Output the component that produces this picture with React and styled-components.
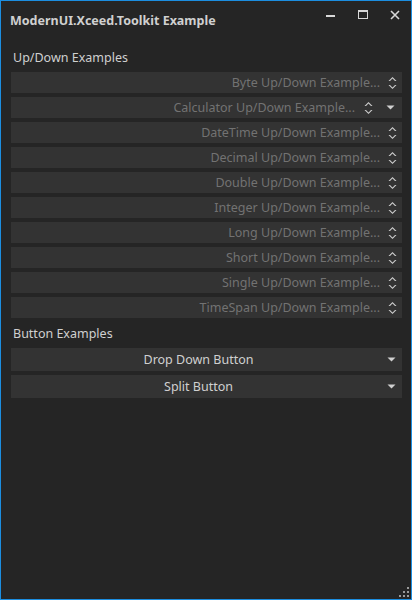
import React from 'react';
import styled, { createGlobalStyle } from 'styled-components';

const GlobalStyle = createGlobalStyle`
  html, body {
    margin: 0;
    padding: 0;
    background: #252525;
  }
  * {
    box-sizing: border-box;
  }
`;

const upDownExamples = [
  { label: 'Byte Up/Down Example...' },
  { label: 'Calculator Up/Down Example...', dropDown: true },
  { label: 'DateTime Up/Down Example...' },
  { label: 'Decimal Up/Down Example...' },
  { label: 'Double Up/Down Example...' },
  { label: 'Integer Up/Down Example...' },
  { label: 'Long Up/Down Example...' },
  { label: 'Short Up/Down Example...' },
  { label: 'Single Up/Down Example...' },
  { label: 'TimeSpan Up/Down Example...' },
];

const SpinIcon = () => (
  <svg width="9" height="14" viewBox="0 0 9 14">
    <path d="M0.5 5 L4.5 1 L8.5 5 L7 5 L4.5 2.6 L2 5 Z" fill="#d0d0d0" />
    <path d="M0.5 9 L4.5 13 L8.5 9 L7 9 L4.5 11.4 L2 9 Z" fill="#d0d0d0" />
  </svg>
);

const DropIcon = () => (
  <svg width="9" height="5" viewBox="0 0 9 5">
    <path d="M0.5 0.5 L8.5 0.5 L4.5 4.5 Z" fill="#d0d0d0" />
  </svg>
);

const App = () => {
  return (
    <>
      <GlobalStyle />
      <Window>
        <TitleBar>
          <Title>ModernUI.Xceed.Toolkit Example</Title>
          <Controls>
            <ControlButton>
              <svg width="10" height="10" viewBox="0 0 10 10">
                <rect x="0" y="5" width="9" height="2" fill="#d8d8d8" />
              </svg>
            </ControlButton>
            <ControlButton>
              <svg width="10" height="10" viewBox="0 0 10 10">
                <rect x="0.5" y="0.5" width="9" height="8" fill="none" stroke="#d8d8d8" />
                <rect x="0" y="0" width="10" height="2" fill="#d8d8d8" />
              </svg>
            </ControlButton>
            <ControlButton>
              <svg width="10" height="10" viewBox="0 0 10 10">
                <path d="M1 1 L9 9 M9 1 L1 9" stroke="#d8d8d8" strokeWidth="1.6" />
              </svg>
            </ControlButton>
          </Controls>
        </TitleBar>
        <Content>
          <SectionLabel>Up/Down Examples</SectionLabel>
          <FieldList>
            {upDownExamples.map(item => (
              <Field key={item.label}>
                <FieldText>{item.label}</FieldText>
                <IconSlot $width={item.dropDown ? 20 : 19}>
                  <SpinIcon />
                </IconSlot>
                {item.dropDown && (
                  <IconSlot $width={24}>
                    <DropIcon />
                  </IconSlot>
                )}
              </Field>
            ))}
          </FieldList>
          <SectionLabel>Button Examples</SectionLabel>
          <ButtonList>
            <DropButton>
              <ButtonText>Drop Down Button</ButtonText>
              <IconSlot $width={22}>
                <DropIcon />
              </IconSlot>
            </DropButton>
            <DropButton>
              <ButtonText>Split Button</ButtonText>
              <IconSlot $width={22}>
                <DropIcon />
              </IconSlot>
            </DropButton>
          </ButtonList>
        </Content>
        <Grip>
          <svg width="10" height="10" viewBox="0 0 10 10">
            <rect x="8" y="0" width="2" height="2" fill="#9a9a9a" />
            <rect x="4" y="4" width="2" height="2" fill="#9a9a9a" />
            <rect x="8" y="4" width="2" height="2" fill="#9a9a9a" />
            <rect x="0" y="8" width="2" height="2" fill="#9a9a9a" />
            <rect x="4" y="8" width="2" height="2" fill="#9a9a9a" />
            <rect x="8" y="8" width="2" height="2" fill="#9a9a9a" />
          </svg>
        </Grip>
      </Window>
    </>
  );
};

export default App;

const Window = styled.div`
  position: relative;
  width: 412px;
  height: 600px;
  border: 1px solid #1c8ee0;
  background: #252525;
  font-family: 'Noto Sans', 'Open Sans', sans-serif;
  display: flex;
  flex-direction: column;
`;

const TitleBar = styled.div`
  display: flex;
  align-items: flex-start;
  justify-content: space-between;
  height: 49px;
  padding-left: 9px;
`;

const Title = styled.div`
  margin-top: 11px;
  font-size: 12.5px;
  font-weight: 700;
  color: #d0d0d0;
`;

const Controls = styled.div`
  display: flex;
  padding-top: 1px;
`;

const ControlButton = styled.div`
  width: 32px;
  height: 26px;
  display: flex;
  align-items: center;
  justify-content: center;
`;

const Content = styled.div`
  padding: 0 9px 0 10px;
  display: flex;
  flex-direction: column;
`;

const SectionLabel = styled.div`
  font-size: 12.5px;
  color: #d0d0d0;
  padding-left: 2px;
  height: 22px;
  line-height: 16px;
`;

const FieldList = styled.div`
  display: flex;
  flex-direction: column;
  gap: 4px;
  margin-bottom: 8px;
`;

const Field = styled.div`
  display: flex;
  align-items: center;
  height: 21px;
  background: #333333;
`;

const FieldText = styled.div`
  flex: 1;
  text-align: right;
  font-size: 12.5px;
  color: #727272;
  white-space: nowrap;
  overflow: hidden;
  padding-right: 3px;
`;

const IconSlot = styled.div`
  width: ${props => props.$width}px;
  display: flex;
  align-items: center;
  justify-content: center;
`;

const ButtonList = styled.div`
  display: flex;
  flex-direction: column;
  gap: 4px;
`;

const DropButton = styled.div`
  display: flex;
  align-items: center;
  height: 23px;
  background: #333333;
`;

const ButtonText = styled.div`
  flex: 1;
  text-align: center;
  font-size: 12.5px;
  color: #d0d0d0;
  padding-left: 6px;
`;

const Grip = styled.div`
  position: absolute;
  right: 2px;
  bottom: 2px;
  line-height: 0;
`;
